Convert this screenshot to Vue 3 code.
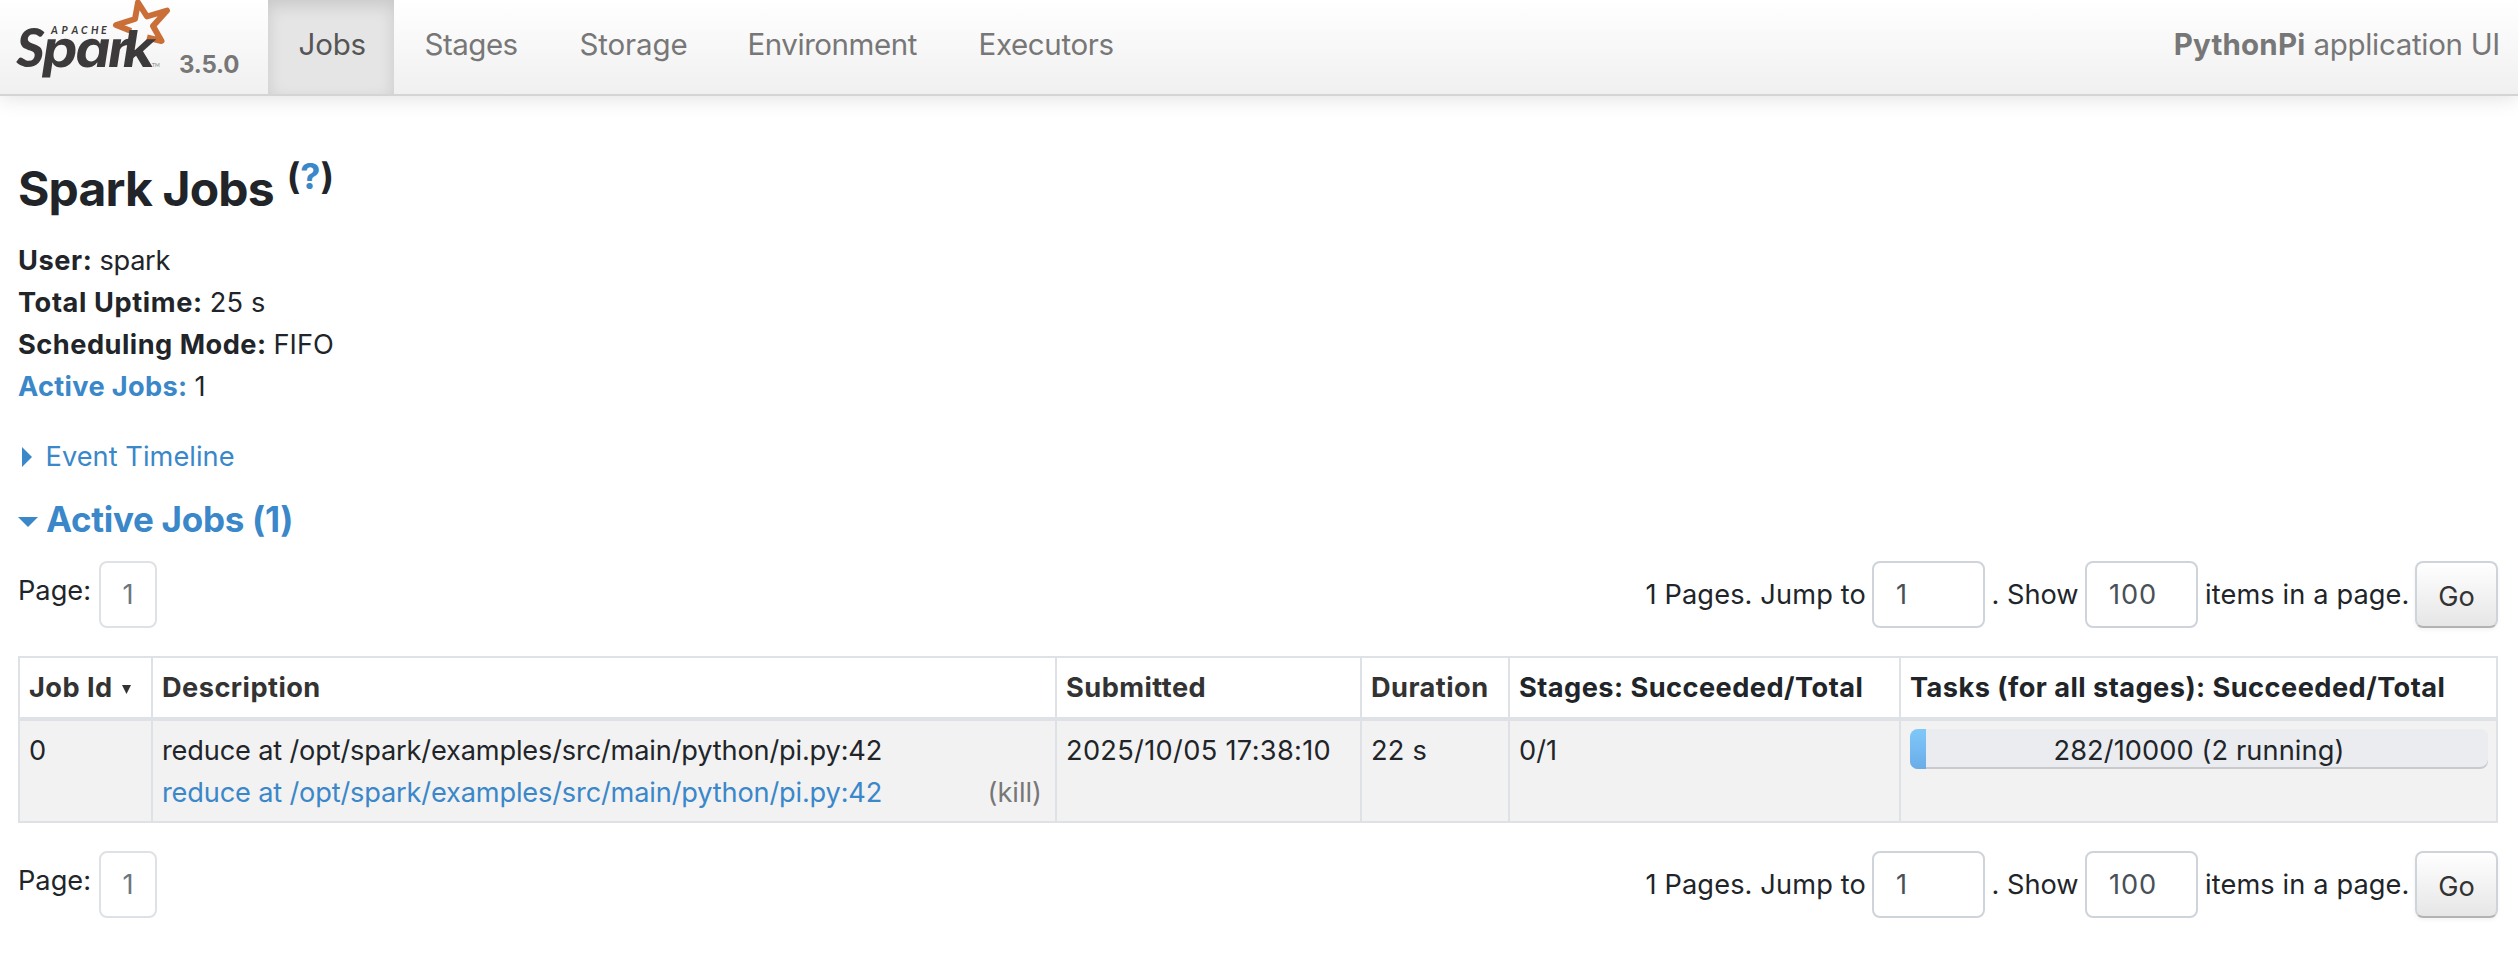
<script setup>
const tabs = [
  { label: 'Jobs', cls: 'jobs', active: true },
  { label: 'Stages', cls: 'stages' },
  { label: 'Storage', cls: 'storage' },
  { label: 'Environment', cls: 'environment' },
  { label: 'Executors', cls: 'executors' },
]
const columns = [
  { label: 'Job Id', cls: 'c-id', sortable: true, sorted: true },
  { label: 'Description', cls: 'c-desc', sortable: true },
  { label: 'Submitted', cls: 'c-sub', sortable: true },
  { label: 'Duration', cls: 'c-dur', sortable: true },
  { label: 'Stages: Succeeded/Total', cls: 'c-stages' },
  { label: 'Tasks (for all stages): Succeeded/Total', cls: 'c-tasks' },
]
const jobs = [
  {
    id: 0,
    name: 'reduce at /opt/spark/examples/src/main/python/pi.py:42',
    submitted: '2025/10/05 17:38:10',
    duration: '22 s',
    stages: '0/1',
    done: 282,
    total: 10000,
    running: 2,
  },
]
const pagers = ['top', 'bottom']
</script>

<template>
  <div class="page">
    <nav class="navbar">
      <a class="brand">
        <svg class="logo" width="154" height="82" viewBox="0 0 154 82">
          <path
            d="M115 31 L100 25 L119 19 L122 2.5 L131 16.5 L151 10.5 L137 26 L145.5 41 L131 37.5"
            fill="none" stroke="#cb6f38" stroke-width="6" stroke-linejoin="round"
          />
          <g fill="#3c3a3a">
            <text class="apache" y="33.5" x="35 45.5 55.5 65 75 85">APACHE</text>
            <text class="spark-s" x="0.5" y="67">S</text>
            <text class="spark" transform="translate(24 67) scale(1.1 1) skewX(-8)" x="0 30 59.5 73">park</text>
            <text class="tm" x="136" y="66.5">TM</text>
          </g>
        </svg>
        <span class="version">3.5.0</span>
      </a>
      <ul class="tabs">
        <li v-for="t in tabs" :key="t.label" :class="['tab', t.cls, { active: t.active }]">
          <span>{{ t.label }}</span>
        </li>
      </ul>
      <p class="app-name"><strong>PythonPi</strong> <span>application UI</span></p>
    </nav>

    <main class="content">
      <h3 class="title"><span>Spark Jobs</span><sup>(<a>?</a>)</sup></h3>
      <ul class="summary">
        <li><strong class="s-user">User:</strong><span class="v-user">spark</span></li>
        <li><strong class="s-up">Total Uptime:</strong><span class="v-up">25 s</span></li>
        <li><strong class="s-mode">Scheduling Mode:</strong><span>FIFO</span></li>
        <li><a><strong class="s-active">Active Jobs:</strong></a><span>1</span></li>
      </ul>
      <a class="timeline"><i class="arrow-right"></i><span>Event Timeline</span></a>
      <h4 class="active-title"><i class="arrow-down"></i><a>Active Jobs (1)</a></h4>

      <template v-for="p in pagers" :key="p">
        <div class="pager">
          <span class="page-label">Page:</span>
          <a class="page-box">1</a>
          <form class="jump" @submit.prevent>
            <label class="l-pages">1 Pages. Jump to</label>
            <span class="field">1</span>
            <label class="l-show">. Show</label>
            <span class="field">100</span>
            <label class="l-items">items in a page.</label>
            <button type="submit">Go</button>
          </form>
        </div>

        <table v-if="p === 'top'" class="jobs-table">
          <thead>
            <tr>
              <th v-for="c in columns" :key="c.label" :class="[c.cls, { sortable: c.sortable }]">
                <span>{{ c.label }}</span><svg v-if="c.sorted" class="sort" width="9" height="9" viewBox="0 0 9 9"><path d="M0 0H9L4.5 9Z" fill="#333" /></svg>
              </th>
            </tr>
          </thead>
          <tbody>
            <tr v-for="j in jobs" :key="j.id">
              <td>{{ j.id }}</td>
              <td>
                <div class="desc">{{ j.name }}</div>
                <div class="desc-row"><a class="desc">{{ j.name }}</a><a class="kill">(kill)</a></div>
              </td>
              <td class="date">{{ j.submitted }}</td>
              <td class="dur">{{ j.duration }}</td>
              <td>{{ j.stages }}</td>
              <td class="tasks">
                <div class="progress">
                  <div class="bar" :style="{ width: (j.done / j.total) * 100 + '%' }"></div>
                  <span>{{ j.done }}/{{ j.total }} ({{ j.running }} running)</span>
                </div>
              </td>
            </tr>
          </tbody>
        </table>
      </template>
    </main>
  </div>
</template>

<style>
html, body { background: #fff; }
</style>

<style scoped>
* { box-sizing: border-box; }
.page {
  width: 2518px;
  height: 954px;
  overflow: hidden;
  background: #fff;
  color: #212529;
  font-family: Inter, "Liberation Sans", sans-serif;
  font-size: 27.2px;
  line-height: 42px;
  white-space: nowrap;
}
ul, h3, h4, p { margin: 0; padding: 0; list-style: none; }
a { color: #3a87c9; text-decoration: none; }
strong { font-weight: 700; }

.navbar {
  display: flex;
  height: 96px;
  border-bottom: 2px solid #d4d4d4;
  background: linear-gradient(#fff, #f0f0f0);
  box-shadow: 0 2px 20px rgba(0, 0, 0, 0.12);
  font-size: 29.5px;
  color: #777;
}
.brand { display: flex; width: 268px; padding-left: 16px; }
.logo { display: block; flex: none; }
.apache { font: italic 700 10.5px Lato, sans-serif; }
.spark-s { font: italic 900 54px Lato, sans-serif; }
.spark { font: 650 51px Inter, sans-serif; font-feature-settings: "cv11"; }
.tm { font: 700 5px Lato, sans-serif; fill: #999; }
.version {
  margin: 44px 0 0 9px;
  font-size: 24px;
  font-weight: 700;
  letter-spacing: -0.2px;
  color: #777;
}
.tabs { display: flex; }
.tab { height: 94px; padding-left: 30.5px; line-height: 88px; }
.jobs { width: 126px; letter-spacing: -0.2px; }
.stages { width: 155px; letter-spacing: -0.5px; }
.storage { width: 168px; letter-spacing: -0.12px; }
.environment { width: 231px; letter-spacing: -0.45px; }
.executors { letter-spacing: -0.35px; }
.tab.active {
  background: #e5e5e5;
  box-shadow: inset 0 6px 16px rgba(0, 0, 0, 0.125);
  color: #555;
}
.app-name { display: flex; margin-left: auto; padding-right: 18px; line-height: 88px; }
.app-name strong { margin-right: 8px; letter-spacing: 0.2px; }
.app-name span { letter-spacing: -0.3px; }

.content { padding: 0 20px 0 18px; }
.title {
  display: flex;
  height: 144px;
  padding-top: 63px;
  font-size: 48px;
  font-weight: 700;
  line-height: 60px;
  letter-spacing: -0.85px;
}
.title sup { margin: -13px 0 0 13px; font-size: 36px; letter-spacing: 0.1px; vertical-align: baseline; }
.summary { height: 168px; }
.summary li { display: flex; gap: 7px; }
.s-user { letter-spacing: 0.6px; }
.v-user { letter-spacing: -0.3px; }
.s-up { letter-spacing: 0.6px; }
.v-up { letter-spacing: 0.2px; }
.s-mode { letter-spacing: 0.49px; }
.s-active { letter-spacing: 0.33px; }
.timeline { display: flex; align-items: center; margin-top: 28px; letter-spacing: 0.05px; }
.arrow-right {
  margin: 0 13.5px 0 4px;
  border: 10px solid transparent;
  border-left-color: #3a87c9;
  border-right: 0;
}
.active-title {
  display: flex;
  align-items: center;
  margin: 20px 0 21px;
  font-size: 35px;
  letter-spacing: -0.3px;
}
.arrow-down {
  margin: 5px 8px 0 0;
  border: 10px solid transparent;
  border-top-color: #3a87c9;
  border-bottom: 0;
}

.pager { display: flex; height: 67px; line-height: 67px; }
.page-label { width: 81px; margin-top: -4px; }
.page-box {
  width: 58px;
  border: 2px solid #dee2e6;
  border-radius: 8px;
  line-height: 64px;
  text-align: center;
  color: #6c757d;
}
.jump { display: flex; margin-left: auto; }
.l-pages { width: 226.5px; letter-spacing: 0.13px; }
.l-show { width: 100px; padding-left: 6.5px; }
.l-items { width: 217px; padding-left: 7px; letter-spacing: 0.12px; }
.field {
  width: 113px;
  padding-left: 22px;
  border: 2px solid #ced4da;
  border-radius: 8px;
  line-height: 64px;
  color: #495057;
  letter-spacing: 0.9px;
}
.jump button {
  width: 83px;
  padding: 0 0 2px;
  border: 2px solid #ced4da;
  border-bottom-color: #b3b3b3;
  border-radius: 8px;
  background: linear-gradient(#fff, #e6e6e6);
  box-shadow: 0 2px 4px rgba(0, 0, 0, 0.05);
  color: #333;
  font: inherit;
}

.jobs-table {
  width: 2480px;
  margin: 28px 0;
  table-layout: fixed;
  border-spacing: 0;
  border-right: 2px solid #dee2e6;
}
.jobs-table th, .jobs-table td {
  padding: 9px 8px 0 9px;
  border-left: 2px solid #dee2e6;
  text-align: left;
  vertical-align: top;
}
.jobs-table th {
  height: 65px;
  border-top: 2px solid #dee2e6;
  border-bottom: 4px solid #dee2e6;
  letter-spacing: 0.45px;
}
.jobs-table th.sortable { color: #333; }
.jobs-table td { height: 102px; border-bottom: 2px solid #dee2e6; background: #f2f2f2; }
.jobs-table td.tasks { padding-top: 8px; }
.c-id { width: 133px; }
.c-desc { width: 904px; }
.c-sub { width: 305px; }
.c-dur { width: 148px; }
.c-stages { width: 391px; }
.sort { margin-left: 9px; vertical-align: 3px; }
.desc { letter-spacing: -0.17px; }
.date { letter-spacing: 0.32px; }
.dur { letter-spacing: 0.2px; }
.desc-row { display: flex; justify-content: space-between; padding-right: 5px; }
.kill { color: #777; }
.progress {
  position: relative;
  height: 40px;
  overflow: hidden;
  border-radius: 8px;
  background: #eaecf0;
  box-shadow: inset 0 -2px 0 #c8cacd;
  line-height: 44px;
  text-align: center;
  letter-spacing: 0.1px;
}
.bar { position: absolute; top: 0; left: 0; height: 40px; background: linear-gradient(#80c8f9, #6aace8); }
.progress span { position: relative; }
</style>
